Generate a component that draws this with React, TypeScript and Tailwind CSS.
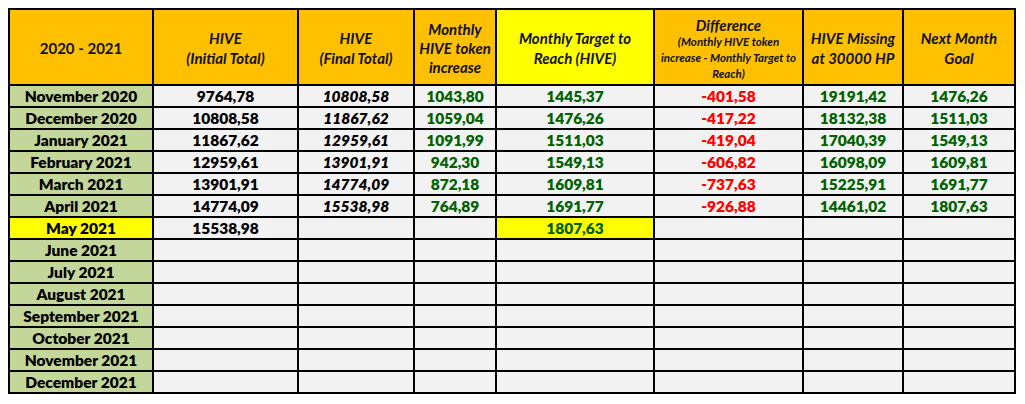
const rows: (string | null)[][] = [
  ["November 2020", "9764,78", "10808,58", "1043,80", "1445,37", "-401,58", "19191,42", "1476,26"],
  ["December 2020", "10808,58", "11867,62", "1059,04", "1476,26", "-417,22", "18132,38", "1511,03"],
  ["January 2021", "11867,62", "12959,61", "1091,99", "1511,03", "-419,04", "17040,39", "1549,13"],
  ["February 2021", "12959,61", "13901,91", "942,30", "1549,13", "-606,82", "16098,09", "1609,81"],
  ["March 2021", "13901,91", "14774,09", "872,18", "1609,81", "-737,63", "15225,91", "1691,77"],
  ["April 2021", "14774,09", "15538,98", "764,89", "1691,77", "-926,88", "14461,02", "1807,63"],
  ["May 2021", "15538,98", null, null, "1807,63", null, null, null],
  ["June 2021", null, null, null, null, null, null, null],
  ["July 2021", null, null, null, null, null, null, null],
  ["August 2021", null, null, null, null, null, null, null],
  ["September 2021", null, null, null, null, null, null, null],
  ["October 2021", null, null, null, null, null, null, null],
  ["November 2021", null, null, null, null, null, null, null],
  ["December 2021", null, null, null, null, null, null, null],
];

const cellText = [
  "text-black",
  "text-black",
  "text-black italic",
  "text-[#006100]",
  "text-[#006100]",
  "text-[#ff0000]",
  "text-[#006100]",
  "text-[#006100]",
];

function HeaderCell({
  children,
  yellow,
  className = "pt-[2px]",
}: {
  children: React.ReactNode;
  yellow?: boolean;
  className?: string;
}) {
  return (
    <div
      className={`flex flex-col items-center justify-center text-center whitespace-nowrap ${
        yellow ? "bg-[#ffff00]" : "bg-[#ffc000]"
      } ${className}`}
    >
      {children}
    </div>
  );
}

export default function App() {
  return (
    <div className="h-[404px] w-[1025px] bg-white pt-2 pl-2" style={{ fontFamily: "Lato, 'Liberation Sans', sans-serif" }}>
      <div className="grid w-[1008px] grid-cols-[142px_143px_114px_80px_156px_147px_98px_110px] grid-rows-[74px_repeat(14,20px)] gap-[2px] bg-black p-[2px] text-[15px] font-bold text-[#111]">
        <HeaderCell>
          <span className="leading-[20px]">2020 - 2021</span>
        </HeaderCell>
        <HeaderCell>
          <span className="italic leading-[20px]">HIVE</span>
          <span className="italic leading-[20px]">(Initial Total)</span>
        </HeaderCell>
        <HeaderCell>
          <span className="italic leading-[20px]">HIVE</span>
          <span className="italic leading-[20px]">(Final Total)</span>
        </HeaderCell>
        <HeaderCell>
          <span className="italic leading-[19px]">Monthly</span>
          <span className="italic leading-[19px]">HIVE token</span>
          <span className="italic leading-[19px]">increase</span>
        </HeaderCell>
        <HeaderCell yellow>
          <span className="italic leading-[20px]">Monthly Target to</span>
          <span className="italic leading-[20px]">Reach (HIVE)</span>
        </HeaderCell>
        <HeaderCell className="pt-[4px]">
          <span className="italic leading-[18px]">Difference</span>
          <span className="text-[11.5px] italic leading-[16px]">(Monthly HIVE token</span>
          <span className="text-[11.5px] italic leading-[16px]">increase - Monthly Target to</span>
          <span className="text-[11.5px] italic leading-[16px]">Reach)</span>
        </HeaderCell>
        <HeaderCell>
          <span className="italic leading-[20px]">HIVE Missing</span>
          <span className="italic leading-[20px]">at 30000 HP</span>
        </HeaderCell>
        <HeaderCell>
          <span className="italic leading-[20px]">Next Month</span>
          <span className="italic leading-[20px]">Goal</span>
        </HeaderCell>

        {rows.map((row, r) =>
          row.map((value, c) => {
            const isMay = row[0] === "May 2021";
            let bg = "bg-[#f2f2f2]";
            if (c === 0) bg = isMay ? "bg-[#ffff00]" : "bg-[#c4d79b]";
            else if (isMay && c === 4) bg = "bg-[#ffff00]";
            return (
              <div
                key={`${r}-${c}`}
                className={`flex items-center justify-center pt-[1px] text-[15.5px] font-extrabold leading-[19px] whitespace-nowrap ${bg} ${cellText[c]}`}
              >
                {value}
              </div>
            );
          }),
        )}
      </div>
    </div>
  );
}
